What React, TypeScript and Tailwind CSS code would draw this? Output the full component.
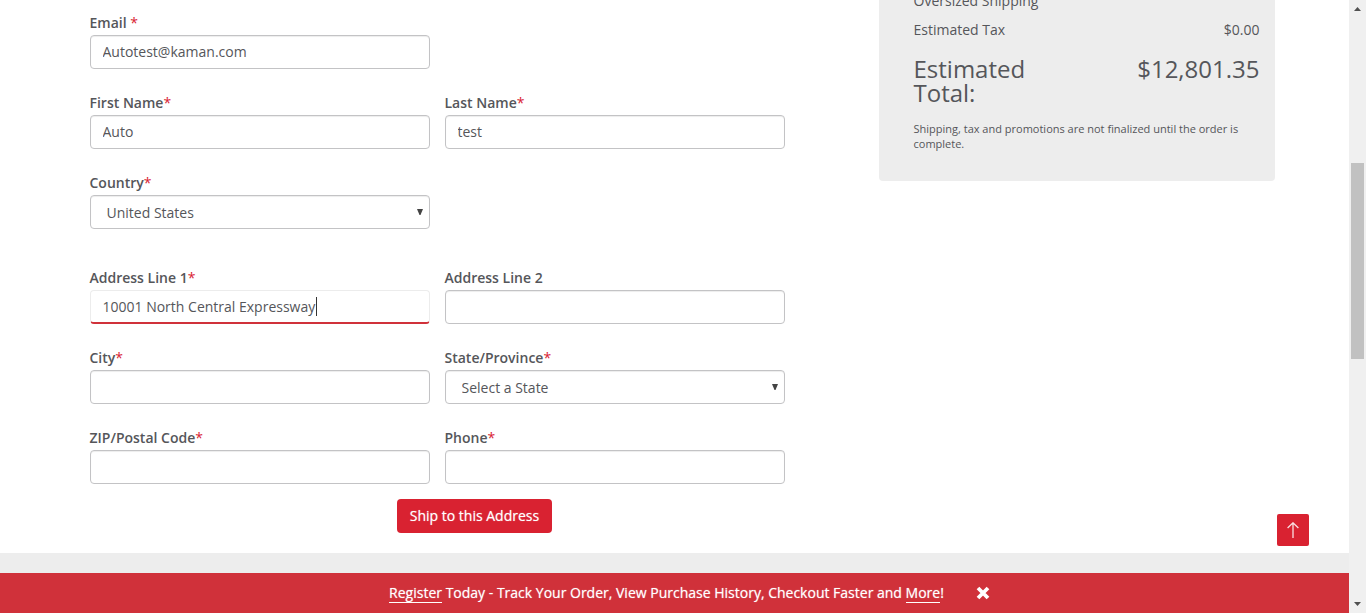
import { ReactNode } from "react";

const controlClass =
  "block h-[34px] w-full rounded-[4px] border border-[#c3c3c5] bg-white px-[12px] text-[14px] leading-[20px] text-[#55565a] shadow-[inset_0_1px_1px_rgba(0,0,0,0.075)] outline-none";

const focusedClass =
  "block h-[34px] w-full rounded-[4px] border border-b-2 border-[#ececec] border-b-[#d0313a] bg-white px-[12px] text-[14px] leading-[20px] text-[#55565a] outline-none";

function Label({ htmlFor, children, required }: { htmlFor: string; children: ReactNode; required?: boolean }) {
  return (
    <label htmlFor={htmlFor} className="mb-[2px] block text-[14px] leading-[20px] font-semibold text-[#55565a]">
      {children}
      {required && <span className="font-normal text-[#d92231]">*</span>}
    </label>
  );
}

function TextField({
  id,
  label,
  value,
  required,
  type = "text",
}: {
  id: string;
  label: string;
  value?: string;
  required?: boolean;
  type?: string;
}) {
  return (
    <div>
      <Label htmlFor={id} required={required}>
        {label}
      </Label>
      <input id={id} type={type} defaultValue={value} className={`${controlClass} pb-[2px]`} />
    </div>
  );
}

function SelectField({ id, label, options }: { id: string; label: string; options: string[] }) {
  return (
    <div>
      <Label htmlFor={id} required>
        {label}
      </Label>
      <div className="relative">
        <select id={id} className={`${controlClass} appearance-none pt-[2px] pl-[16px]`}>
          {options.map((o) => (
            <option key={o}>{o}</option>
          ))}
        </select>
        <svg
          viewBox="0 0 6 6"
          className="pointer-events-none absolute top-[14px] right-[7px] size-[6px] fill-[#444]"
          aria-hidden="true"
        >
          <path d="M0 0H6L3.5 6H2.5Z" />
        </svg>
      </div>
    </div>
  );
}

function AddressForm() {
  return (
    <form className="pt-[13px]">
      <div className="grid w-full max-w-[695px] grid-cols-2 gap-x-[15px] gap-y-[24px]">
        <TextField id="email" label="Email " value="Autotest@kaman.com" required />
        <div />
        <TextField id="first" label="First Name" value="Auto" required />
        <TextField id="last" label="Last Name" value="test" required />
        <div className="mb-[15px]">
          <SelectField id="country" label="Country" options={["United States", "Canada"]} />
        </div>
        <div />
        <div>
          <Label htmlFor="address1" required>
            Address Line 1
          </Label>
          <div className="relative">
            <input
              id="address1"
              type="text"
              defaultValue="10001 North Central Expressway"
              className={focusedClass}
            />
            <span className="absolute top-[7px] left-[226px] h-[19px] w-px bg-[#333]" />
          </div>
        </div>
        <TextField id="address2" label="Address Line 2" />
        <TextField id="city" label="City" required />
        <SelectField id="state" label="State/Province" options={["Select a State"]} />
        <TextField id="zip" label="ZIP/Postal Code" required />
        <TextField id="phone" label="Phone" type="tel" required />
      </div>
      <div className="mt-[15px] flex justify-center">
        <button
          type="button"
          className="h-[34px] rounded-[4px] bg-[#d92231] px-[13px] text-[14px] leading-[20px] font-medium text-white [text-shadow:0_0_1px_rgba(255,255,255,0.6)]"
        >
          Ship to this Address
        </button>
      </div>
    </form>
  );
}

function OrderSummary() {
  return (
    <aside className="ml-auto w-[33%] self-start rounded-b-[4px] bg-[#ededed] pr-[15px] pb-[29px] pl-[35px] text-[#55565a]">
      <div className="-mt-[9px] flex justify-between text-[14px] leading-[20px]">
        <span>Oversized Shipping</span>
      </div>
      <div className="mt-[9px] flex justify-between text-[14px] leading-[20px]">
        <span>Estimated Tax</span>
        <span>$0.00</span>
      </div>
      <div className="mt-[17px] grid grid-cols-2 text-[24px] leading-[24px]">
        <span>Estimated Total:</span>
        <span className="text-right">$12,801.35</span>
      </div>
      <p className="mt-[16px] mb-[1px] text-[11px] leading-[15px]">
        Shipping, tax and promotions are not finalized until the order is complete.
      </p>
    </aside>
  );
}

function RegisterBanner() {
  return (
    <div className="flex h-[40px] items-center justify-center gap-[32px] bg-[#d0313a] pl-[30px] text-[14px] leading-[20px] font-medium text-white">
      <p className="[text-shadow:0_0_1px_rgba(255,255,255,0.6)]">
        <a href="#register" className="border-b border-white">
          Register
        </a>{" "}
        Today - Track Your Order, View Purchase History, Checkout Faster and{" "}
        <a href="#more" className="border-b border-white">
          More
        </a>
        !
      </p>
      <button type="button" aria-label="Close">
        <svg viewBox="0 0 14 14" className="size-[14px]" aria-hidden="true">
          <path d="M2 2L12 12M12 2L2 12" stroke="white" strokeWidth="3.8" fill="none" />
        </svg>
      </button>
    </div>
  );
}

function ScrollRail() {
  return (
    <div className="flex w-[17px] shrink-0 flex-col items-center justify-between bg-[#f0f0f0]" aria-hidden="true">
      <svg viewBox="0 0 7 4" className="mt-[7px] h-[4px] w-[7px] fill-[#505050]">
        <path d="M0 4L3.5 0L7 4Z" />
      </svg>
      <div className="mt-[152px] mb-auto h-[196px] w-[13px] bg-[#c1c1c1]" />
      <svg viewBox="0 0 7 4" className="mb-[7px] h-[4px] w-[7px] fill-[#505050]">
        <path d="M0 0H7L3.5 4Z" />
      </svg>
    </div>
  );
}

export default function App() {
  return (
    <div className="flex min-h-screen overflow-hidden bg-white font-['Open_Sans',sans-serif]">
      <div className="relative flex min-w-0 flex-1 flex-col">
        <main className="mx-auto flex w-full max-w-[1200px] flex-1 pb-[20px]">
          <div className="w-2/3 px-[15px]">
            <AddressForm />
          </div>
          <OrderSummary />
        </main>
        <footer>
          <div className="h-[20px] bg-[#ededed]" />
          <RegisterBanner />
        </footer>
        <button
          type="button"
          aria-label="Back to top"
          className="absolute right-[40px] bottom-[67px] flex size-[32px] items-center justify-center rounded-[2px] bg-[#d92231]"
        >
          <svg viewBox="0 0 12 16" className="h-[16px] w-[12px]" fill="none" stroke="white" aria-hidden="true">
            <path d="M6 16V1M0.6 6L6 0.8L11.4 6" strokeWidth="1.3" strokeOpacity="0.85" />
          </svg>
        </button>
      </div>
      <ScrollRail />
    </div>
  );
}
